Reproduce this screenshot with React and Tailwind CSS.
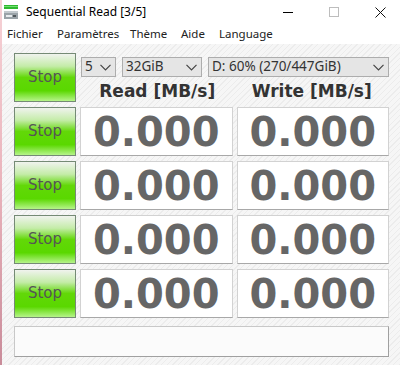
import React from "react";

const ui = { fontFamily: '"Noto Sans", "DejaVu Sans", sans-serif' };
const dv = { fontFamily: '"DejaVu Sans", "Noto Sans", sans-serif' };

function StopButton() {
  return (
    <div
      className="h-[49px] w-[62px] flex items-center justify-center border border-[#758a75] text-[15px] text-[#555] bg-[linear-gradient(to_bottom,#f0f3ee_0%,#c4eca8_26%,#62d808_50%,#5ad800_78%,#b6f48a_100%)]"
      style={dv}
    >
      Stop
    </div>
  );
}

function ValueBox() {
  return (
    <div
      className="h-[49px] flex-1 flex items-center justify-center bg-white border border-[#d2d2d2] border-b-[#a8a8a8] text-[40px] font-bold text-[#666] leading-none"
      style={dv}
    >
      0.000
    </div>
  );
}

function Chevron() {
  return (
    <svg width="11" height="7" viewBox="0 0 11 7" className="shrink-0">
      <path d="M0.5 0.8 L5.5 5.8 L10.5 0.8" fill="none" stroke="#444" strokeWidth="1.2" />
    </svg>
  );
}

function Select({ w, text }) {
  return (
    <div
      className={`h-[20px] ${w} flex items-center justify-between pl-[3px] pr-[4px] bg-[#e5e5e5] border border-[#adadad] text-[13.5px] text-[#333]`}
      style={ui}
    >
      <span className="leading-none">{text}</span>
      <Chevron />
    </div>
  );
}

export default function App() {
  return (
    <div className="w-[400px] h-[365px] flex overflow-hidden bg-white">
      <div className="w-[2px] h-full shrink-0 bg-[linear-gradient(to_bottom,#f6d2d6,#eab4bc_50%,#c98c9a)]" />
      <div className="flex-1 flex flex-col">
        {/* title bar */}
        <div className="h-[24px] flex items-center bg-white" style={ui}>
          <svg width="16" height="16" viewBox="0 0 16 16" className="ml-[1px]">
            <rect x="1" y="1" width="14" height="4" fill="#2fb82f" />
            <rect x="1" y="2" width="14" height="1" fill="#6fe06f" />
            <rect x="1" y="7" width="14" height="8" fill="#9aa3a8" />
            <rect x="1" y="7" width="14" height="2" fill="#c3cace" />
            <rect x="3" y="11" width="6" height="2" fill="#e8ecee" />
            <rect x="10" y="11" width="3" height="2" fill="#50585c" />
          </svg>
          <span className="ml-[7px] text-[12px] text-black">Sequential Read [3/5]</span>
          <div className="flex-1" />
          <div className="w-[46px] flex justify-center">
            <div className="w-[10px] h-[1px] bg-black" />
          </div>
          <div className="w-[46px] flex justify-center">
            <div className="w-[10px] h-[10px] border border-[#bdbdbd]" />
          </div>
          <div className="w-[46px] flex justify-center mr-[-2px]">
            <svg width="11" height="11" viewBox="0 0 11 11">
              <path d="M0.5 0.5 L10.5 10.5 M10.5 0.5 L0.5 10.5" stroke="#111" strokeWidth="1" />
            </svg>
          </div>
        </div>
        {/* menu bar */}
        <div className="h-[20px] flex items-center text-[11.5px] text-[#222] bg-white pl-[5px]" style={ui}>
          <span className="w-[50px]">Fichier</span>
          <span className="w-[73px]">Paramètres</span>
          <span className="w-[51px]">Thème</span>
          <span className="w-[38px]">Aide</span>
          <span>Language</span>
        </div>
        {/* body */}
        <div className="flex-1 pl-[12px] pr-[12px] pt-[9px] flex flex-col gap-[5px] bg-[#f3f3f3] bg-[repeating-linear-gradient(135deg,#f6f6f6_0px,#f6f6f6_3px,#ececec_3px,#ececec_4px)]">
          {/* row 1 */}
          <div className="flex gap-[4px] h-[49px]">
            <StopButton />
            <div className="flex-1 flex flex-col">
              <div className="flex gap-[6px] pl-[1px] pt-[4px]">
                <Select w="w-[35px]" text="5" />
                <Select w="w-[80px]" text="32GiB" />
                <Select w="w-[181px]" text="D: 60% (270/447GiB)" />
              </div>
              <div className="flex flex-1 items-end pb-[2px] text-[17px] font-bold text-[#333] leading-none" style={dv}>
                <div className="flex-1 text-center">Read [MB/s]</div>
                <div className="flex-1 text-center">Write [MB/s]</div>
              </div>
            </div>
          </div>
          {[0, 1, 2, 3].map((i) => (
            <div key={i} className="flex gap-[4px]">
              <StopButton />
              <ValueBox />
              <ValueBox />
            </div>
          ))}
          <div className="mt-[3px] h-[31px] bg-[#fbfbfb] border border-[#c8c8c8] border-b-[#a0a0a0] border-r-[#a0a0a0]" />
        </div>
      </div>
    </div>
  );
}
